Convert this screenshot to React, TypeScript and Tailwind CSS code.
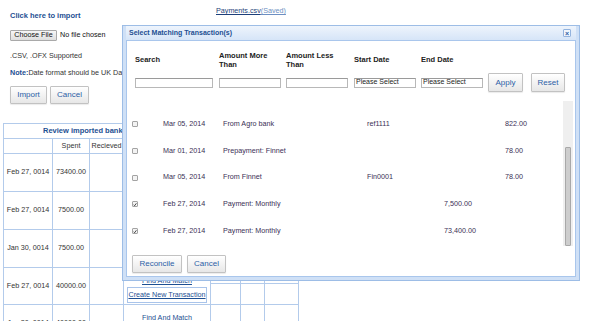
import React from "react";

type Txn = {
  checked: boolean;
  date: string;
  desc: string;
  ref: string;
  spent: string;
  received: string;
};

const txns: Txn[] = [
  { checked: false, date: "Mar 05, 2014", desc: "From Agro bank", ref: "ref1111", spent: "", received: "822.00" },
  { checked: false, date: "Mar 01, 2014", desc: "Prepayment: Finnet", ref: "", spent: "", received: "78.00" },
  { checked: false, date: "Mar 05, 2014", desc: "From Finnet", ref: "Fin0001", spent: "", received: "78.00" },
  { checked: true, date: "Feb 27, 2014", desc: "Payment: Monthly", ref: "", spent: "7,500.00", received: "" },
  { checked: true, date: "Feb 27, 2014", desc: "Payment: Monthly", ref: "", spent: "73,400.00", received: "" },
];

const bankRows = [
  { date: "Feb 27, 0014", spent: "73400.00", h: "h-[38px]" },
  { date: "Feb 27, 0014", spent: "7500.00", h: "h-[38px]" },
  { date: "Jan 30, 0014", spent: "7500.00", h: "h-[38px]" },
  { date: "Feb 27, 0014", spent: "40000.00", h: "h-[37px]" },
  { date: "Jan 30, 0014", spent: "40000.00", h: "h-[38px]" },
];

const btn =
  "flex items-center justify-center rounded-[1px] border border-[#c2c2c2] bg-linear-to-b from-white to-[#e7e7e7] text-[8px] text-[#2c5fa6] shadow-[0_1px_1px_rgba(0,0,0,0.08)]";

const cell = "border-r border-b border-[#b3cbeb]";

export default function App() {
  return (
    <div className="relative h-[321px] w-[600px] overflow-hidden bg-white font-['Liberation_Sans',Arial,sans-serif] text-[7.2px] text-[#333]">
      <div className="flex pt-[6px]">
        <div className="w-[216px] pl-[10px] pt-[5px]">
          <div className="text-[7.5px] font-bold leading-[9px] text-[#1d4f92]">Click here to import</div>
          <div className="mt-[10px] flex h-[11px] items-center">
            <div className="flex h-[11px] w-[47px] items-center justify-center rounded-[1px] border border-[#a9a9a9] bg-linear-to-b from-[#f6f6f6] to-[#dedede] text-[7.2px] text-[#111]">
              Choose File
            </div>
            <span className="ml-[3px] text-[#111]">No file chosen</span>
          </div>
          <div className="mt-[10px] leading-[9px]">.CSV, .OFX Supported</div>
          <div className="mt-[8px] whitespace-nowrap leading-[9px]">
            <span className="font-bold text-[#1d4f92]">Note:</span>Date format should be UK Date format (dd/mm/yyyy)
          </div>
          <div className="mt-[9px] flex gap-[3px]">
            <div className={`${btn} h-[18px] w-[37px]`}>Import</div>
            <div className={`${btn} h-[18px] w-[39px]`}>Cancel</div>
          </div>
        </div>
        <div className="text-[7.2px] leading-[9px]">
          <span className="text-[#1d3f7a] underline">Payments.csv</span>
          <span className="text-[#6d8fc2] underline">(Saved)</span>
        </div>
      </div>

      {/* imported bank table, partly covered by the dialog */}
      <div className="ml-[3px] mt-[19px] grid w-[295px] grid-cols-[49px_37px_34px_87px_30px_24px_34px] border-t border-l border-[#b3cbeb]">
        <div className={`${cell} col-span-7 flex h-[15px] items-center whitespace-nowrap pl-[39px] text-[7.5px] font-bold text-[#1d4f92]`}>
          Review imported bank statement
        </div>
        <div className={`${cell} h-[15px]`} />
        <div className={`${cell} flex h-[15px] items-center justify-center`}>Spent</div>
        <div className={`${cell} flex h-[15px] items-center justify-center`}>Recieved</div>
        <div className={`${cell} h-[15px]`} />
        <div className={`${cell} h-[15px]`} />
        <div className={`${cell} h-[15px]`} />
        <div className={`${cell} h-[15px]`} />
        {bankRows.map((r, i) => (
          <React.Fragment key={i}>
            <div className={`${cell} ${r.h} flex items-center justify-center whitespace-nowrap`}>{r.date}</div>
            <div className={`${cell} ${r.h} flex items-center justify-center`}>{r.spent}</div>
            <div className={`${cell} ${r.h}`} />
            <div className={`${cell} ${r.h} flex flex-col items-center pt-[8px] text-[#1d4f92]`}>
              <span className="leading-[9px] underline">Find And Match</span>
              <div className="mt-[2px] flex h-[16px] w-[80px] items-center justify-center border border-[#a9c4ea] underline">
                Create New Transaction
              </div>
            </div>
            {[0, 1, 2].map((c) => (
              <div key={c} className={`${cell} ${r.h}`}>
                {i === 3 && <div className="h-[16px] border-b border-[#b3cbeb]" />}
              </div>
            ))}
          </React.Fragment>
        ))}
      </div>

      {/* dialog */}
      <div className="absolute left-[122px] top-[25px] flex h-[256px] w-[458px] flex-col border border-[#9dbde6] bg-[#cfe0f6] px-[3px] pb-[3px]">
        <div className="flex h-[14px] shrink-0 items-center justify-between bg-linear-to-b from-[#eef4fc] to-[#d6e5f8] px-[3px]">
          <span className="text-[7px] font-bold text-[#1d4f92]">Select Matching Transaction(s)</span>
          <span className="mr-[2px] flex h-[8px] w-[8px] items-center justify-center rounded-[1px] border border-[#93b3de] bg-[#f1f6fd] text-[7px] leading-none font-bold text-[#2c5fa6]">
            ×
          </span>
        </div>
        <div className="flex flex-1 flex-col border border-[#a9c6ec] bg-white">
          <div className="flex pl-[8px] pt-[9px] text-[7.5px] font-bold leading-[9px] text-[#222]">
            <div className="flex h-[19px] w-[78px] items-center">Search</div>
            <div className="ml-[6px] flex h-[19px] w-[62px] items-center">Amount More<br />Than</div>
            <div className="ml-[5px] flex h-[19px] w-[62px] items-center">Amount Less<br />Than</div>
            <div className="ml-[6px] flex h-[19px] w-[62px] items-center">Start Date</div>
            <div className="ml-[5px] flex h-[19px] w-[62px] items-center">End Date</div>
          </div>
          <div className="mt-[4px] flex h-[19px] items-center pl-[8px]">
            <div className="h-[10px] w-[78px] border border-[#b8b8b8] border-t-[#9a9a9a]" />
            <div className="ml-[6px] h-[10px] w-[62px] border border-[#b8b8b8] border-t-[#9a9a9a]" />
            <div className="ml-[5px] h-[10px] w-[62px] border border-[#b8b8b8] border-t-[#9a9a9a]" />
            <div className="ml-[6px] flex h-[10px] w-[62px] items-center border border-[#b8b8b8] border-t-[#9a9a9a] pl-[1px] text-[7px] text-[#222]">
              Please Select
            </div>
            <div className="ml-[5px] flex h-[10px] w-[62px] items-center border border-[#b8b8b8] border-t-[#9a9a9a] pl-[1px] text-[7px] text-[#222]">
              Please Select
            </div>
            <div className={`${btn} ml-[5px] h-[19px] w-[35px]`}>Apply</div>
            <div className={`${btn} ml-[8px] h-[19px] w-[34px]`}>Reset</div>
          </div>

          <div className="mt-[9px] flex h-[145px] pr-[2px]">
            <div className="flex-1 pt-[10px] text-[#3a2f55]">
              {txns.map((t, i) => (
                <div key={i} className="flex h-[26.7px] items-center">
                  <div className="w-[36px] pl-[5px]">
                    <span className="flex h-[6px] w-[6px] items-center justify-center rounded-[1px] border border-[#a3a3a3] bg-[#f3f3f3]">
                      {t.checked && (
                        <svg width="5" height="5" viewBox="0 0 10 10">
                          <path d="M1.5 5.5 L4 8 L8.5 2" fill="none" stroke="#222" strokeWidth="2" />
                        </svg>
                      )}
                    </span>
                  </div>
                  <div className="w-[60px] whitespace-nowrap">{t.date}</div>
                  <div className="w-[144px] whitespace-nowrap">{t.desc}</div>
                  <div className="w-[77px]">{t.ref}</div>
                  <div className="w-[61px]">{t.spent}</div>
                  <div>{t.received}</div>
                </div>
              ))}
            </div>
            <div className="flex w-[10px] flex-col bg-[#efefef] px-[2px]">
              <div className="mt-[46px] flex-1 rounded-[1px] border border-[#a8a8a8] bg-[#cdcdcd]" />
            </div>
          </div>

          <div className="mt-[9px] flex gap-[5px] pl-[5px]">
            <div className={`${btn} h-[18px] w-[50px]`}>Reconcile</div>
            <div className={`${btn} h-[18px] w-[39px]`}>Cancel</div>
          </div>
        </div>
      </div>
    </div>
  );
}
